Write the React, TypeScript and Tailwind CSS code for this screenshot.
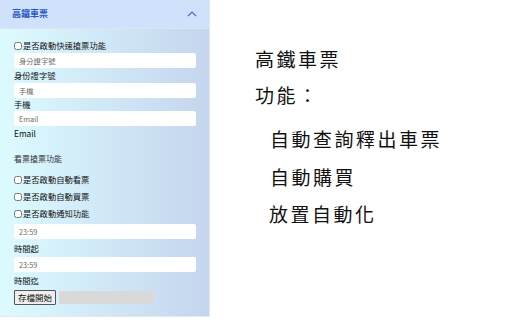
import React, { useState } from 'react';

const font = { fontFamily: '"Noto Sans CJK TC", "Noto Sans", sans-serif' };

function Check({ label, className = 'h-[17px]' }: { label: string; className?: string }) {
  const [on, setOn] = useState(false);
  return (
    <label className={`flex items-center text-[8.3px] text-[#111] ${className}`}>
      <input
        type="checkbox"
        checked={on}
        onChange={() => setOn(!on)}
        className="w-[8px] h-[8px] m-0 mr-[1px]"
      />
      {label}
    </label>
  );
}

function Field({ placeholder }: { placeholder: string }) {
  return (
    <input
      placeholder={placeholder}
      className="w-[182px] h-[15px] shrink-0 bg-white rounded-[2px] px-[5px] text-[7.3px] text-[#333] placeholder:text-[#6b6b6b] outline-none"
    />
  );
}

function App() {
  const [open, setOpen] = useState(true);

  return (
    <div className="w-[512px] h-[320px] bg-white flex" style={font}>
      <div className="w-[210px] h-[317px] flex flex-col border-r border-b border-[#e4e8ee]">
        <div className="h-[29px] shrink-0 bg-[#d0e1fc] border-b border-[#dde5ee] flex items-center justify-between pl-[12px] pr-[12px]">
          <span className="text-[9px] font-bold text-[#2b59c3]">高鐵車票</span>
          <button onClick={() => setOpen(!open)} className="text-[#4a6fd0]">
            <svg width="10" height="6" viewBox="0 0 10 6" fill="none" stroke="currentColor" strokeWidth="1.2">
              <path d="M1 5 L5 1 L9 5" />
            </svg>
          </button>
        </div>
        {open && (
          <div className="flex-1 bg-gradient-to-r from-[#dcfbff] to-[#c5d5ee] pl-[14px] pt-[9px] flex flex-col">
            <Check label="是否啟動快速搶票功能" className="h-[15px]" />
            <Field placeholder="身分證字號" />
            <div className="h-[15px] shrink-0 flex items-center text-[8.3px] text-[#111]">身份證字號</div>
            <Field placeholder="手機" />
            <div className="h-[13px] shrink-0 flex items-center text-[8.3px] text-[#111]">手機</div>
            <Field placeholder="Email" />
            <div className="h-[14px] shrink-0 flex items-center text-[8.3px] text-[#111]">Email</div>
            <div className="h-[25px] shrink-0 flex items-end text-[8px] leading-[12px] text-[#333]">看票搶票功能</div>
            <div className="h-[6px] shrink-0" />
            <Check label="是否啟動自動看票" />
            <Check label="是否啟動自動買票" />
            <Check label="是否啟動通知功能" />
            <div className="h-[2px] shrink-0" />
            <Field placeholder="23:59" />
            <div className="h-[18px] shrink-0 flex items-center text-[8.3px] text-[#111]">時間起</div>
            <Field placeholder="23:59" />
            <div className="h-[17px] shrink-0 flex items-center text-[8.3px] text-[#111]">時間迄</div>
            <div className="flex items-center gap-[3px] mt-[1px]">
              <button className="h-[15px] px-[3px] text-[8.5px] text-[#111] bg-[#efefef] border border-[#555] rounded-[1px] leading-none">
                存檔開始
              </button>
              <div className="w-[95px] h-[13px] bg-[#d9d9d9]" />
            </div>
          </div>
        )}
      </div>
      <div className="flex-1 pl-[45px] pt-[49px] flex flex-col text-[19px] tracking-[2.5px] text-[#111] leading-none">
        <div className="h-[36px]">高鐵車票</div>
        <div className="h-[44px]">功能：</div>
        <div className="h-[38px] pl-[15px]">自動查詢釋出車票</div>
        <div className="h-[37px] pl-[15px]">自動購買</div>
        <div className="pl-[14px]">放置自動化</div>
      </div>
    </div>
  );
}

export default App;
